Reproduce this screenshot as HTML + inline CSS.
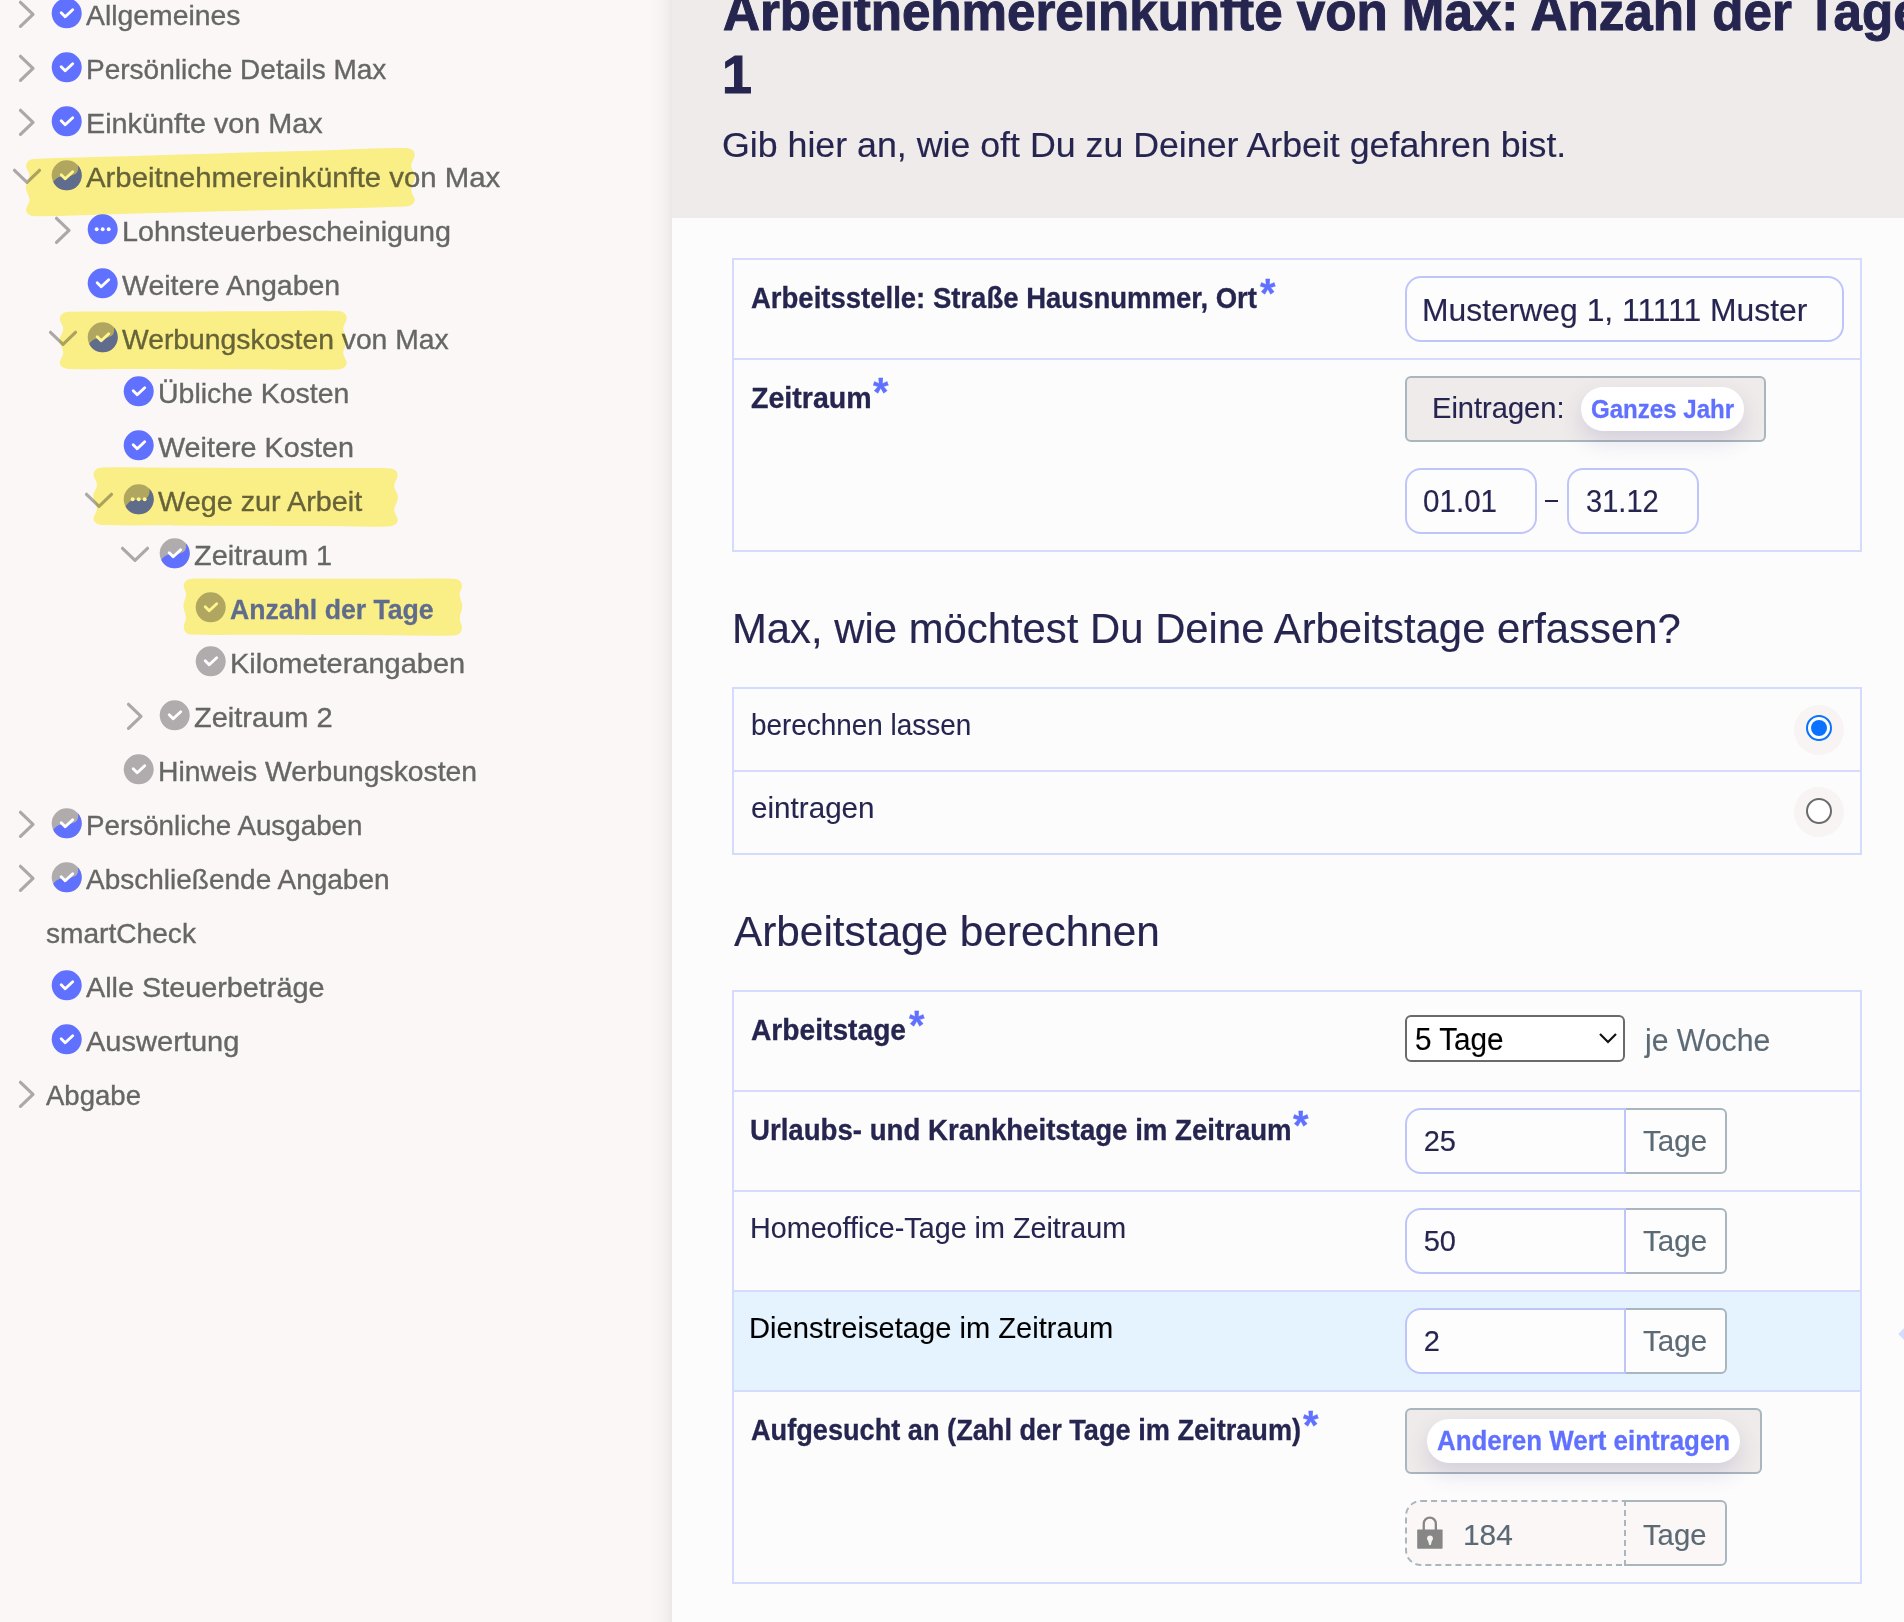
<!DOCTYPE html>
<html><head><meta charset="utf-8">
<style>
html,body{margin:0;padding:0;}
body{width:1904px;height:1622px;overflow:hidden;position:relative;background:#fcfcfc;font-family:"Liberation Sans",sans-serif;}
.t{position:absolute;white-space:pre;line-height:1;transform-origin:0 0;}
.b{position:absolute;box-sizing:border-box;}
svg{position:absolute;left:0;top:0;}
</style></head><body>
<div class="b" style="left:0;top:0;width:672px;height:1622px;background:#faf7f6;"></div>
<div class="b" style="left:650px;top:0;width:22px;height:1622px;background:linear-gradient(90deg,rgba(60,40,40,0) 0%,rgba(60,40,40,0.015) 40%,rgba(60,40,40,0.04) 75%,rgba(60,40,40,0.075) 100%);"></div>
<div class="b" style="left:672px;top:0;width:1232px;height:218px;background:#efebea;"></div>
<div class="b" style="left:672px;top:218px;width:1232px;height:1404px;background:#fcfcfc;"></div>

<!-- table 1 -->
<div class="b" style="left:732px;top:258px;width:1130px;height:294px;border:2px solid #d5dbfc;"></div>
<div class="b" style="left:734px;top:358px;width:1126px;height:2px;background:#d5dbfc;"></div>
<div class="b" style="left:1405px;top:276px;width:439px;height:66px;border:2px solid #bec5fb;border-radius:16px;background:#fdfdfd;"></div>
<div class="b" style="left:1405px;top:376px;width:361px;height:66px;border:2px solid #a9b6be;border-radius:6px;background:#efebea;"></div>
<div class="b" style="left:1581px;top:387px;width:163px;height:44px;border-radius:22px;background:#fff;box-shadow:0 10px 22px rgba(70,60,140,0.16);"></div>
<div class="b" style="left:1405px;top:468px;width:132px;height:66px;border:2px solid #bec5fb;border-radius:16px;background:#fdfdfd;"></div>
<div class="b" style="left:1567px;top:468px;width:132px;height:66px;border:2px solid #bec5fb;border-radius:16px;background:#fdfdfd;"></div>
<div class="b" style="left:1545px;top:499.5px;width:13px;height:2.5px;background:#25254f;"></div>

<!-- table 2 -->
<div class="b" style="left:732px;top:687px;width:1130px;height:168px;border:2px solid #d5dbfc;"></div>
<div class="b" style="left:734px;top:770px;width:1126px;height:2px;background:#d5dbfc;"></div>
<div class="b" style="left:1794px;top:705px;width:50px;height:50px;border-radius:25px;background:#f8f4f3;"></div>
<div class="b" style="left:1806px;top:715px;width:26px;height:26px;border-radius:13px;border:2.5px solid #0a72ff;background:#fff;"></div>
<div class="b" style="left:1811px;top:720px;width:16px;height:16px;border-radius:8px;background:#0a72ff;"></div>
<div class="b" style="left:1794px;top:787px;width:50px;height:50px;border-radius:25px;background:#f8f4f3;"></div>
<div class="b" style="left:1806px;top:798px;width:26px;height:26px;border-radius:13px;border:2.5px solid #6b6b6b;background:#fff;"></div>

<!-- table 3 -->
<div class="b" style="left:732px;top:990px;width:1130px;height:594px;border:2px solid #d5dbfc;"></div>
<div class="b" style="left:734px;top:1090px;width:1126px;height:2px;background:#d5dbfc;"></div>
<div class="b" style="left:734px;top:1190px;width:1126px;height:2px;background:#d5dbfc;"></div>
<div class="b" style="left:734px;top:1292px;width:1126px;height:98px;background:#e5f3fe;"></div>
<div class="b" style="left:734px;top:1290px;width:1126px;height:2px;background:#d5dbfc;"></div>
<div class="b" style="left:734px;top:1390px;width:1126px;height:2px;background:#d5dbfc;"></div>
<div class="b" style="left:1405px;top:1015px;width:220px;height:47px;border:2px solid #6a6a6a;border-radius:6px;background:#fff;"></div>
<div class="b" style="left:1622px;top:1108px;width:105px;height:66px;border:2px solid #a9b6be;border-radius:0 6px 6px 0;background:#fdfdfd;"></div>
<div class="b" style="left:1405px;top:1108px;width:221px;height:66px;border:2px solid #bec5fb;border-radius:16px 0 0 16px;background:#fdfdfd;"></div>
<div class="b" style="left:1622px;top:1208px;width:105px;height:66px;border:2px solid #a9b6be;border-radius:0 6px 6px 0;background:#fdfdfd;"></div>
<div class="b" style="left:1405px;top:1208px;width:221px;height:66px;border:2px solid #bec5fb;border-radius:16px 0 0 16px;background:#fdfdfd;"></div>
<div class="b" style="left:1622px;top:1308px;width:105px;height:66px;border:2px solid #a9b6be;border-radius:0 6px 6px 0;background:#fdfdfd;"></div>
<div class="b" style="left:1405px;top:1308px;width:221px;height:66px;border:2px solid #bec5fb;border-radius:16px 0 0 16px;background:#fdfdfd;"></div>
<div class="b" style="left:1405px;top:1408px;width:357px;height:66px;border:2px solid #a9b6be;border-radius:6px;background:#efebea;"></div>
<div class="b" style="left:1427px;top:1419px;width:313px;height:44px;border-radius:22px;background:#fff;box-shadow:0 10px 22px rgba(70,60,140,0.16);"></div>
<div class="b" style="left:1622px;top:1500px;width:105px;height:66px;border:2px solid #a9b6be;border-radius:0 6px 6px 0;background:#faf7f6;"></div>
<div class="b" style="left:1405px;top:1500px;width:221px;height:66px;border:2px dashed #a9b6be;border-radius:16px 0 0 16px;background:#faf7f6;"></div>
<div class="b" style="left:1900px;top:1330px;width:8px;height:8px;background:#d5dbfc;transform:rotate(45deg);"></div>
<svg width="1904" height="1622" viewBox="0 0 1904 1622" style="z-index:1">
<defs>
<clipPath id="cc"><circle cx="15" cy="15" r="15"/></clipPath>
</defs>
<g transform="translate(51.70,-1.70)"><circle cx="15" cy="15" r="15" fill="#6070ff"/><polyline points="9.5,14.5 13.5,18.5 21,11.5" fill="none" stroke="#fff" stroke-width="2.9" stroke-linecap="round" stroke-linejoin="round"/></g><g transform="translate(51.70,52.30)"><circle cx="15" cy="15" r="15" fill="#6070ff"/><polyline points="9.5,14.5 13.5,18.5 21,11.5" fill="none" stroke="#fff" stroke-width="2.9" stroke-linecap="round" stroke-linejoin="round"/></g><g transform="translate(51.70,106.30)"><circle cx="15" cy="15" r="15" fill="#6070ff"/><polyline points="9.5,14.5 13.5,18.5 21,11.5" fill="none" stroke="#fff" stroke-width="2.9" stroke-linecap="round" stroke-linejoin="round"/></g><g transform="translate(51.70,160.30)"><circle cx="15" cy="15" r="15" fill="#b0acad"/><path clip-path="url(#cc)" d="M0,24 C3,19 6,17 8.5,16.5 L14,17.5 C18,16 21,15 23.7,13.8 C26.5,12 27.5,8 25,0 L32,0 L32,32 L0,32 Z" fill="#6070ff"/><polyline points="9.5,14.5 13.5,18.5 21,11.5" fill="none" stroke="#fff" stroke-width="2.9" stroke-linecap="round" stroke-linejoin="round"/></g><g transform="translate(87.70,214.30)"><circle cx="15" cy="15" r="15" fill="#6070ff"/><circle cx="9" cy="15" r="1.95" fill="#fff"/><circle cx="15" cy="15" r="1.95" fill="#fff"/><circle cx="21" cy="15" r="1.95" fill="#fff"/></g><g transform="translate(87.70,268.30)"><circle cx="15" cy="15" r="15" fill="#6070ff"/><polyline points="9.5,14.5 13.5,18.5 21,11.5" fill="none" stroke="#fff" stroke-width="2.9" stroke-linecap="round" stroke-linejoin="round"/></g><g transform="translate(87.70,322.30)"><circle cx="15" cy="15" r="15" fill="#b0acad"/><path clip-path="url(#cc)" d="M0,24 C3,19 6,17 8.5,16.5 L14,17.5 C18,16 21,15 23.7,13.8 C26.5,12 27.5,8 25,0 L32,0 L32,32 L0,32 Z" fill="#6070ff"/><polyline points="9.5,14.5 13.5,18.5 21,11.5" fill="none" stroke="#fff" stroke-width="2.9" stroke-linecap="round" stroke-linejoin="round"/></g><g transform="translate(123.70,376.30)"><circle cx="15" cy="15" r="15" fill="#6070ff"/><polyline points="9.5,14.5 13.5,18.5 21,11.5" fill="none" stroke="#fff" stroke-width="2.9" stroke-linecap="round" stroke-linejoin="round"/></g><g transform="translate(123.70,430.30)"><circle cx="15" cy="15" r="15" fill="#6070ff"/><polyline points="9.5,14.5 13.5,18.5 21,11.5" fill="none" stroke="#fff" stroke-width="2.9" stroke-linecap="round" stroke-linejoin="round"/></g><g transform="translate(123.70,484.30)"><circle cx="15" cy="15" r="15" fill="#b0acad"/><path clip-path="url(#cc)" d="M0,26 C3,19 7,15.5 12,15.5 L18,15.5 C23,15.5 27,12 25.5,3 L32,0 L32,32 L0,32 Z" fill="#6070ff"/><circle cx="9" cy="15" r="1.95" fill="#fff"/><circle cx="15" cy="15" r="1.95" fill="#fff"/><circle cx="21" cy="15" r="1.95" fill="#fff"/></g><g transform="translate(159.70,538.30)"><circle cx="15" cy="15" r="15" fill="#b0acad"/><path clip-path="url(#cc)" d="M0,24 C3,19 6,17 8.5,16.5 L14,17.5 C18,16 21,15 23.7,13.8 C26.5,12 27.5,8 25,0 L32,0 L32,32 L0,32 Z" fill="#6070ff"/><polyline points="9.5,14.5 13.5,18.5 21,11.5" fill="none" stroke="#fff" stroke-width="2.9" stroke-linecap="round" stroke-linejoin="round"/></g><g transform="translate(195.70,592.30)"><circle cx="15" cy="15" r="15" fill="#b0acad"/><polyline points="9.5,14.5 13.5,18.5 21,11.5" fill="none" stroke="#fff" stroke-width="2.9" stroke-linecap="round" stroke-linejoin="round"/></g><g transform="translate(195.70,646.30)"><circle cx="15" cy="15" r="15" fill="#b0acad"/><polyline points="9.5,14.5 13.5,18.5 21,11.5" fill="none" stroke="#fff" stroke-width="2.9" stroke-linecap="round" stroke-linejoin="round"/></g><g transform="translate(159.70,700.30)"><circle cx="15" cy="15" r="15" fill="#b0acad"/><polyline points="9.5,14.5 13.5,18.5 21,11.5" fill="none" stroke="#fff" stroke-width="2.9" stroke-linecap="round" stroke-linejoin="round"/></g><g transform="translate(123.70,754.30)"><circle cx="15" cy="15" r="15" fill="#b0acad"/><polyline points="9.5,14.5 13.5,18.5 21,11.5" fill="none" stroke="#fff" stroke-width="2.9" stroke-linecap="round" stroke-linejoin="round"/></g><g transform="translate(51.70,808.30)"><circle cx="15" cy="15" r="15" fill="#b0acad"/><path clip-path="url(#cc)" d="M0,24 C3,19 6,17 8.5,16.5 L14,17.5 C18,16 21,15 23.7,13.8 C26.5,12 27.5,8 25,0 L32,0 L32,32 L0,32 Z" fill="#6070ff"/><polyline points="9.5,14.5 13.5,18.5 21,11.5" fill="none" stroke="#fff" stroke-width="2.9" stroke-linecap="round" stroke-linejoin="round"/></g><g transform="translate(51.70,862.30)"><circle cx="15" cy="15" r="15" fill="#b0acad"/><path clip-path="url(#cc)" d="M0,24 C3,19 6,17 8.5,16.5 L14,17.5 C18,16 21,15 23.7,13.8 C26.5,12 27.5,8 25,0 L32,0 L32,32 L0,32 Z" fill="#6070ff"/><polyline points="9.5,14.5 13.5,18.5 21,11.5" fill="none" stroke="#fff" stroke-width="2.9" stroke-linecap="round" stroke-linejoin="round"/></g><g transform="translate(51.70,970.30)"><circle cx="15" cy="15" r="15" fill="#6070ff"/><polyline points="9.5,14.5 13.5,18.5 21,11.5" fill="none" stroke="#fff" stroke-width="2.9" stroke-linecap="round" stroke-linejoin="round"/></g><g transform="translate(51.70,1024.30)"><circle cx="15" cy="15" r="15" fill="#6070ff"/><polyline points="9.5,14.5 13.5,18.5 21,11.5" fill="none" stroke="#fff" stroke-width="2.9" stroke-linecap="round" stroke-linejoin="round"/></g><polyline points="20.5,2.3 33.0,14.3 20.5,26.3" fill="none" stroke="#aca8aa" stroke-width="3.2" stroke-linecap="round" stroke-linejoin="round"/><polyline points="20.5,56.3 33.0,68.3 20.5,80.3" fill="none" stroke="#aca8aa" stroke-width="3.2" stroke-linecap="round" stroke-linejoin="round"/><polyline points="20.5,110.3 33.0,122.3 20.5,134.3" fill="none" stroke="#aca8aa" stroke-width="3.2" stroke-linecap="round" stroke-linejoin="round"/><polyline points="14.5,170.3 27.0,182.3 39.5,170.3" fill="none" stroke="#aca8aa" stroke-width="3.2" stroke-linecap="round" stroke-linejoin="round"/><polyline points="56.5,218.3 69.0,230.3 56.5,242.3" fill="none" stroke="#aca8aa" stroke-width="3.2" stroke-linecap="round" stroke-linejoin="round"/><polyline points="50.5,332.3 63.0,344.3 75.5,332.3" fill="none" stroke="#aca8aa" stroke-width="3.2" stroke-linecap="round" stroke-linejoin="round"/><polyline points="86.5,494.3 99.0,506.3 111.5,494.3" fill="none" stroke="#aca8aa" stroke-width="3.2" stroke-linecap="round" stroke-linejoin="round"/><polyline points="122.5,548.3 135.0,560.3 147.5,548.3" fill="none" stroke="#aca8aa" stroke-width="3.2" stroke-linecap="round" stroke-linejoin="round"/><polyline points="128.5,704.3 141.0,716.3 128.5,728.3" fill="none" stroke="#aca8aa" stroke-width="3.2" stroke-linecap="round" stroke-linejoin="round"/><polyline points="20.5,812.3 33.0,824.3 20.5,836.3" fill="none" stroke="#aca8aa" stroke-width="3.2" stroke-linecap="round" stroke-linejoin="round"/><polyline points="20.5,866.3 33.0,878.3 20.5,890.3" fill="none" stroke="#aca8aa" stroke-width="3.2" stroke-linecap="round" stroke-linejoin="round"/><polyline points="20.5,1082.3 33.0,1094.3 20.5,1106.3" fill="none" stroke="#aca8aa" stroke-width="3.2" stroke-linecap="round" stroke-linejoin="round"/>
</svg>
<svg width="1904" height="1622" style="z-index:3">
<polyline points="1600,1034 1608,1042 1616,1034" fill="none" stroke="#111" stroke-width="2.2"/>
<g fill="#868686"><path d="M1422.6,1530 v-6.3 a7.2,7.2 0 0 1 14.4,0 v6.3 h-2.3 v-6.3 a4.9,4.9 0 0 0 -9.8,0 v6.3 z"/><rect x="1417.2" y="1529.4" width="25.4" height="19.3" rx="0.8"/></g>
<g fill="#f6f3f2"><circle cx="1430" cy="1538.3" r="2.9"/><path d="M1427.6,1539 L1432.4,1539 L1430.8,1545 L1429.2,1545 Z"/></g>
</svg>
<span class="t" style="z-index:2;left:722.50px;top:-15.28px;font-size:53px;font-weight:700;-webkit-text-stroke:0.3px #25254f;color:#25254f;transform:scaleX(0.9645);-webkit-text-stroke:1px #25254f;">Arbeitnehmereinkünfte von Max: Anzahl der Tage Zeitraum</span>
<span class="t" style="z-index:2;left:721.95px;top:48.22px;font-size:53px;font-weight:700;-webkit-text-stroke:0.3px #25254f;color:#25254f;transform:scaleX(1.0160);-webkit-text-stroke:1px #25254f;">1</span>
<span class="t" style="z-index:2;left:722.46px;top:127.99px;font-size:34.5px;-webkit-text-stroke:0.15px #25254f;color:#25254f;transform:scaleX(1.0359);">Gib hier an, wie oft Du zu Deiner Arbeit gefahren bist.</span>
<span class="t" style="z-index:2;left:751.00px;top:283.10px;font-size:30px;font-weight:700;-webkit-text-stroke:0.3px #25254f;color:#25254f;transform:scaleX(0.9169);">Arbeitsstelle: Straße Hausnummer, Ort</span>
<span class="t" style="z-index:2;left:751.00px;top:383.30px;font-size:30px;font-weight:700;-webkit-text-stroke:0.3px #25254f;color:#25254f;transform:scaleX(0.9519);">Zeitraum</span>
<span class="t" style="z-index:2;left:1421.94px;top:294.95px;font-size:31px;-webkit-text-stroke:0.15px #25254f;color:#25254f;transform:scaleX(1.0276);">Musterweg 1, 11111 Muster</span>
<span class="t" style="z-index:2;left:1432.00px;top:393.75px;font-size:29px;-webkit-text-stroke:0.15px #25254f;color:#25254f;transform:scaleX(1.0020);">Eintragen:</span>
<span class="t" style="z-index:2;left:1590.97px;top:396.29px;font-size:26px;font-weight:700;-webkit-text-stroke:0.3px #6070ff;color:#6070ff;transform:scaleX(0.9257);">Ganzes Jahr</span>
<span class="t" style="z-index:2;left:1422.85px;top:486.25px;font-size:31px;-webkit-text-stroke:0.15px #25254f;color:#25254f;transform:scaleX(0.9544);">01.01</span>
<span class="t" style="z-index:2;left:1585.76px;top:486.25px;font-size:31px;-webkit-text-stroke:0.15px #25254f;color:#25254f;transform:scaleX(0.9385);">31.12</span>
<span class="t" style="z-index:2;left:732.01px;top:607.94px;font-size:42px;-webkit-text-stroke:0.15px #25254f;color:#25254f;transform:scaleX(0.9961);">Max, wie möchtest Du Deine Arbeitstage erfassen?</span>
<span class="t" style="z-index:2;left:750.64px;top:711.15px;font-size:29px;-webkit-text-stroke:0.1px #25254f;color:#25254f;transform:scaleX(0.9616);">berechnen lassen</span>
<span class="t" style="z-index:2;left:750.58px;top:794.15px;font-size:29px;-webkit-text-stroke:0.1px #25254f;color:#25254f;transform:scaleX(1.0219);">eintragen</span>
<span class="t" style="z-index:2;left:734.00px;top:910.49px;font-size:43px;-webkit-text-stroke:0.15px #25254f;color:#25254f;transform:scaleX(0.9843);">Arbeitstage berechnen</span>
<span class="t" style="z-index:2;left:751.00px;top:1015.00px;font-size:30px;font-weight:700;-webkit-text-stroke:0.3px #25254f;color:#25254f;transform:scaleX(0.9394);">Arbeitstage</span>
<span class="t" style="z-index:2;left:1415.04px;top:1023.85px;font-size:31px;-webkit-text-stroke:0.15px #000000;color:#000000;transform:scaleX(0.9578);">5 Tage</span>
<span class="t" style="z-index:2;left:1644.97px;top:1024.85px;font-size:31px;-webkit-text-stroke:0.15px #5b6a75;color:#5b6a75;transform:scaleX(0.9734);">je Woche</span>
<span class="t" style="z-index:2;left:750.08px;top:1115.20px;font-size:30px;font-weight:700;-webkit-text-stroke:0.3px #25254f;color:#25254f;transform:scaleX(0.9205);">Urlaubs- und Krankheitstage im Zeitraum</span>
<span class="t" style="z-index:2;left:1423.70px;top:1127.45px;font-size:29px;-webkit-text-stroke:0.15px #25254f;color:#25254f;">25</span>
<span class="t" style="z-index:2;left:1643.00px;top:1127.45px;font-size:29px;-webkit-text-stroke:0.15px #5b6a75;color:#5b6a75;transform:scaleX(1.0201);">Tage</span>
<span class="t" style="z-index:2;left:749.52px;top:1214.35px;font-size:29px;-webkit-text-stroke:0.1px #25254f;color:#25254f;transform:scaleX(0.9905);">Homeoffice-Tage im Zeitraum</span>
<span class="t" style="z-index:2;left:1423.70px;top:1227.45px;font-size:29px;-webkit-text-stroke:0.15px #25254f;color:#25254f;">50</span>
<span class="t" style="z-index:2;left:1643.00px;top:1227.45px;font-size:29px;-webkit-text-stroke:0.15px #5b6a75;color:#5b6a75;transform:scaleX(1.0201);">Tage</span>
<span class="t" style="z-index:2;left:749.49px;top:1314.15px;font-size:29px;-webkit-text-stroke:0.1px #000000;color:#000000;transform:scaleX(1.0043);">Dienstreisetage im Zeitraum</span>
<span class="t" style="z-index:2;left:1423.70px;top:1327.45px;font-size:29px;-webkit-text-stroke:0.15px #25254f;color:#25254f;">2</span>
<span class="t" style="z-index:2;left:1643.00px;top:1327.45px;font-size:29px;-webkit-text-stroke:0.15px #5b6a75;color:#5b6a75;transform:scaleX(1.0201);">Tage</span>
<span class="t" style="z-index:2;left:751.00px;top:1415.20px;font-size:30px;font-weight:700;-webkit-text-stroke:0.3px #25254f;color:#25254f;transform:scaleX(0.9050);">Aufgesucht an (Zahl der Tage im Zeitraum)</span>
<span class="t" style="z-index:2;left:1437.00px;top:1428.34px;font-size:27px;font-weight:700;-webkit-text-stroke:0.3px #6070ff;color:#6070ff;transform:scaleX(0.9593);">Anderen Wert eintragen</span>
<span class="t" style="z-index:2;left:1462.61px;top:1519.70px;font-size:30px;-webkit-text-stroke:0.15px #5b6a75;color:#5b6a75;transform:scaleX(0.9964);">184</span>
<span class="t" style="z-index:2;left:1643.00px;top:1520.12px;font-size:29.5px;-webkit-text-stroke:0.15px #5b6a75;color:#5b6a75;transform:scaleX(0.9911);">Tage</span>
<span class="t" style="z-index:2;left:1259.90px;top:272.99px;font-size:41px;font-weight:700;-webkit-text-stroke:0.3px #6070ff;color:#6070ff;transform:scaleX(0.9688);">*</span>
<span class="t" style="z-index:2;left:873.00px;top:372.29px;font-size:41px;font-weight:700;-webkit-text-stroke:0.3px #6070ff;color:#6070ff;transform:scaleX(0.9688);">*</span>
<span class="t" style="z-index:2;left:908.60px;top:1005.09px;font-size:41px;font-weight:700;-webkit-text-stroke:0.3px #6070ff;color:#6070ff;transform:scaleX(0.9688);">*</span>
<span class="t" style="z-index:2;left:1292.90px;top:1105.09px;font-size:41px;font-weight:700;-webkit-text-stroke:0.3px #6070ff;color:#6070ff;transform:scaleX(0.9688);">*</span>
<span class="t" style="z-index:2;left:1303.40px;top:1404.89px;font-size:41px;font-weight:700;-webkit-text-stroke:0.3px #6070ff;color:#6070ff;transform:scaleX(0.9688);">*</span>
<span class="t" style="z-index:2;left:86.00px;top:1.99px;font-size:28px;-webkit-text-stroke:0.35px #666666;color:#666666;transform:scaleX(1.0124);">Allgemeines</span>
<span class="t" style="z-index:2;left:86.00px;top:55.99px;font-size:28px;-webkit-text-stroke:0.35px #666666;color:#666666;">Persönliche Details Max</span>
<span class="t" style="z-index:2;left:86.00px;top:109.99px;font-size:28px;-webkit-text-stroke:0.35px #666666;color:#666666;transform:scaleX(1.0272);">Einkünfte von Max</span>
<span class="t" style="z-index:2;left:86.00px;top:163.99px;font-size:28px;-webkit-text-stroke:0.35px #666666;color:#666666;transform:scaleX(1.0478);">Arbeitnehmereinkünfte von Max</span>
<span class="t" style="z-index:2;left:122.00px;top:217.99px;font-size:28px;-webkit-text-stroke:0.35px #666666;color:#666666;transform:scaleX(1.0256);">Lohnsteuerbescheinigung</span>
<span class="t" style="z-index:2;left:122.00px;top:271.99px;font-size:28px;-webkit-text-stroke:0.35px #666666;color:#666666;transform:scaleX(1.0183);">Weitere Angaben</span>
<span class="t" style="z-index:2;left:122.00px;top:325.99px;font-size:28px;-webkit-text-stroke:0.35px #666666;color:#666666;transform:scaleX(1.0108);">Werbungskosten von Max</span>
<span class="t" style="z-index:2;left:158.00px;top:379.99px;font-size:28px;-webkit-text-stroke:0.35px #666666;color:#666666;transform:scaleX(1.0163);">Übliche Kosten</span>
<span class="t" style="z-index:2;left:158.00px;top:433.99px;font-size:28px;-webkit-text-stroke:0.35px #666666;color:#666666;transform:scaleX(1.0267);">Weitere Kosten</span>
<span class="t" style="z-index:2;left:158.00px;top:487.99px;font-size:28px;-webkit-text-stroke:0.35px #666666;color:#666666;transform:scaleX(1.0276);">Wege zur Arbeit</span>
<span class="t" style="z-index:2;left:194.00px;top:541.99px;font-size:28px;-webkit-text-stroke:0.35px #666666;color:#666666;transform:scaleX(1.0319);">Zeitraum 1</span>
<span class="t" style="z-index:2;left:230.00px;top:595.99px;font-size:28px;font-weight:700;-webkit-text-stroke:0.3px #6070ff;color:#6070ff;transform:scaleX(0.9508);">Anzahl der Tage</span>
<span class="t" style="z-index:2;left:230.00px;top:649.99px;font-size:28px;-webkit-text-stroke:0.35px #666666;color:#666666;transform:scaleX(1.0346);">Kilometerangaben</span>
<span class="t" style="z-index:2;left:194.00px;top:703.99px;font-size:28px;-webkit-text-stroke:0.35px #666666;color:#666666;transform:scaleX(1.0357);">Zeitraum 2</span>
<span class="t" style="z-index:2;left:158.00px;top:757.99px;font-size:28px;-webkit-text-stroke:0.35px #666666;color:#666666;transform:scaleX(1.0117);">Hinweis Werbungskosten</span>
<span class="t" style="z-index:2;left:86.00px;top:811.99px;font-size:28px;-webkit-text-stroke:0.35px #666666;color:#666666;transform:scaleX(0.9924);">Persönliche Ausgaben</span>
<span class="t" style="z-index:2;left:86.00px;top:865.99px;font-size:28px;-webkit-text-stroke:0.35px #666666;color:#666666;">Abschließende Angaben</span>
<span class="t" style="z-index:2;left:45.60px;top:919.99px;font-size:28px;-webkit-text-stroke:0.35px #666666;color:#666666;transform:scaleX(1.0042);">smartCheck</span>
<span class="t" style="z-index:2;left:86.00px;top:973.99px;font-size:28px;-webkit-text-stroke:0.35px #666666;color:#666666;transform:scaleX(1.0283);">Alle Steuerbeträge</span>
<span class="t" style="z-index:2;left:86.00px;top:1027.99px;font-size:28px;-webkit-text-stroke:0.35px #666666;color:#666666;transform:scaleX(1.0370);">Auswertung</span>
<span class="t" style="z-index:2;left:45.60px;top:1081.99px;font-size:28px;-webkit-text-stroke:0.35px #666666;color:#666666;transform:scaleX(0.9837);">Abgabe</span>
<svg width="1904" height="1622" style="z-index:5;mix-blend-mode:multiply">
<path d="M33.00,158.90 C63.97,157.33 95.00,157.07 126.00,156.15 C157.00,155.23 188.00,154.32 219.00,153.40 C250.00,152.48 281.00,151.57 312.00,150.65 C343.00,149.73 373.99,148.07 405.00,147.90 C407.61,147.89 410.45,148.49 412.50,150.10 C414.03,151.30 414.86,153.58 414.70,155.52 C414.40,159.03 411.15,161.96 411.20,165.48 C411.26,169.59 415.00,173.09 415.00,177.20 C415.00,181.68 411.26,185.61 411.20,190.09 C411.16,193.43 414.40,196.15 414.70,199.47 C414.86,201.23 413.88,203.19 412.50,204.30 C410.72,205.74 408.28,206.39 406.00,206.50 C375.11,207.94 344.17,208.12 313.25,208.93 C282.33,209.73 251.42,210.54 220.50,211.35 C189.58,212.16 158.67,212.97 127.75,213.77 C96.83,214.58 65.93,216.13 35.00,216.20 C32.65,216.21 30.16,215.44 28.30,214.00 C26.94,212.95 25.94,211.04 26.10,209.32 C26.41,206.07 29.65,203.43 29.60,200.16 C29.54,195.77 25.80,191.94 25.80,187.55 C25.80,183.53 29.54,180.11 29.60,176.09 C29.65,172.64 26.40,169.79 26.10,166.35 C25.94,164.46 27.01,162.49 28.30,161.10 C29.48,159.83 31.27,158.99 33.00,158.90 Z" fill="#fff68c"/><path d="M69.00,311.80 C91.41,311.08 113.83,311.68 136.25,311.62 C158.67,311.57 181.08,311.51 203.50,311.45 C225.92,311.39 248.33,311.33 270.75,311.28 C293.17,311.22 315.59,310.48 338.00,311.10 C340.29,311.16 342.78,311.80 344.50,313.30 C345.96,314.58 346.86,316.76 346.70,318.69 C346.40,322.19 343.15,325.11 343.20,328.62 C343.26,332.71 347.00,336.21 347.00,340.30 C347.00,344.77 343.26,348.68 343.20,353.15 C343.16,356.47 346.40,359.18 346.70,362.49 C346.86,364.25 345.84,366.15 344.50,367.30 C342.88,368.68 340.63,369.44 338.50,369.50 C316.01,370.13 293.50,369.42 271.00,369.38 C248.50,369.33 226.00,369.29 203.50,369.25 C181.00,369.21 158.50,369.17 136.00,369.12 C113.50,369.08 90.99,369.71 68.50,369.00 C66.21,368.93 63.80,368.22 62.00,366.80 C60.65,365.74 59.64,363.85 59.80,362.14 C60.11,358.88 63.35,356.25 63.30,352.98 C63.24,348.60 59.50,344.78 59.50,340.40 C59.50,336.38 63.24,332.98 63.30,328.96 C63.35,325.52 60.10,322.67 59.80,319.24 C59.64,317.35 60.53,315.19 62.00,314.00 C63.90,312.46 66.56,311.88 69.00,311.80 Z" fill="#fff68c"/><path d="M102.00,467.60 C125.83,466.98 149.67,467.72 173.50,467.78 C197.33,467.83 221.17,467.89 245.00,467.95 C268.83,468.01 292.67,468.07 316.50,468.12 C340.33,468.18 364.18,467.58 388.00,468.30 C390.60,468.38 393.45,468.90 395.50,470.50 C397.02,471.69 397.86,473.94 397.70,475.87 C397.40,479.35 394.15,482.26 394.20,485.76 C394.26,489.84 398.00,493.32 398.00,497.40 C398.00,501.85 394.26,505.75 394.20,510.20 C394.16,513.52 397.40,516.21 397.70,519.52 C397.86,521.26 396.95,523.31 395.50,524.30 C393.22,525.86 390.26,526.44 387.50,526.50 C363.71,527.05 339.92,526.25 316.12,526.12 C292.33,526.00 268.54,525.88 244.75,525.75 C220.96,525.62 197.17,525.50 173.38,525.38 C149.58,525.25 125.78,525.79 102.00,525.00 C99.78,524.93 97.43,524.20 95.70,522.80 C94.36,521.71 93.34,519.83 93.50,518.11 C93.81,514.85 97.05,512.20 97.00,508.93 C96.94,504.53 93.20,500.70 93.20,496.30 C93.20,492.27 96.94,488.85 97.00,484.82 C97.05,481.36 93.80,478.50 93.50,475.06 C93.34,473.17 94.27,471.05 95.70,469.80 C97.37,468.33 99.78,467.66 102.00,467.60 Z" fill="#fff68c"/><path d="M192.00,578.70 C213.79,578.03 235.60,578.70 257.40,578.70 C279.20,578.70 301.00,578.70 322.80,578.70 C344.60,578.70 366.40,578.70 388.20,578.70 C410.00,578.70 431.81,578.03 453.60,578.70 C455.79,578.77 458.15,579.45 459.80,580.90 C461.21,582.14 462.04,584.20 462.00,586.07 C461.94,589.03 459.46,591.62 459.50,594.58 C459.56,598.47 462.27,602.02 462.30,605.92 C462.34,610.16 459.76,614.14 459.70,618.39 C459.66,621.51 461.98,624.34 462.00,627.46 C462.01,629.51 461.29,631.79 459.80,633.20 C458.21,634.71 455.79,635.34 453.60,635.40 C431.81,636.01 410.00,635.27 388.20,635.20 C366.40,635.13 344.60,635.07 322.80,635.00 C301.00,634.93 279.20,634.87 257.40,634.80 C235.60,634.73 213.79,635.33 192.00,634.60 C189.84,634.53 187.47,633.88 185.90,632.40 C184.43,631.02 183.69,628.79 183.70,626.77 C183.72,623.70 186.04,620.91 186.00,617.83 C185.94,613.64 183.36,609.72 183.40,605.53 C183.43,601.69 186.14,598.19 186.20,594.35 C186.24,591.44 183.77,588.88 183.70,585.97 C183.66,584.13 184.51,582.11 185.90,580.90 C187.53,579.48 189.84,578.77 192.00,578.70 Z" fill="#fff68c"/>
</svg>
</body></html>
